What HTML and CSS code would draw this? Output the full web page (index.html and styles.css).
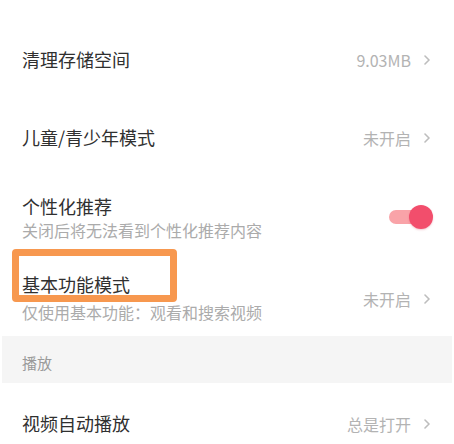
FILE: index.html
```html
<!DOCTYPE html>
<html lang="zh">
<head>
<meta charset="utf-8">
<link rel="stylesheet" href="styles.css">
</head>
<body>
<div class="page">
  <div class="row row-std first">
    <div class="title">清理存储空间</div>
    <div class="value">9.03MB<svg class="chev" width="6" height="10" viewBox="0 0 6 10"><path d="M1 1 L5 5 L1 9" fill="none" stroke="#bdbdbd" stroke-width="1.6" stroke-linecap="round" stroke-linejoin="round"/></svg></div>
  </div>
  <div class="row row-std">
    <div class="title">儿童/青少年模式</div>
    <div class="value">未开启<svg class="chev" width="6" height="10" viewBox="0 0 6 10"><path d="M1 1 L5 5 L1 9" fill="none" stroke="#bdbdbd" stroke-width="1.6" stroke-linecap="round" stroke-linejoin="round"/></svg></div>
  </div>
  <div class="row row-two">
    <div class="block">
      <div class="title">个性化推荐</div>
      <div class="sub">关闭后将无法看到个性化推荐内容</div>
    </div>
    <div class="toggle"><span class="track"></span><span class="thumb"></span></div>
  </div>
  <div class="row row-basic">
    <div class="block">
      <div class="title">基本功能模式</div>
      <div class="sub gap">仅使用基本功能：观看和搜索视频</div>
    </div>
    <div class="value">未开启<svg class="chev" width="6" height="10" viewBox="0 0 6 10"><path d="M1 1 L5 5 L1 9" fill="none" stroke="#bdbdbd" stroke-width="1.6" stroke-linecap="round" stroke-linejoin="round"/></svg></div>
  </div>
  <div class="section">播放</div>
  <div class="row row-last">
    <div class="title">视频自动播放</div>
    <div class="value">总是打开<svg class="chev" width="6" height="10" viewBox="0 0 6 10"><path d="M1 1 L5 5 L1 9" fill="none" stroke="#bdbdbd" stroke-width="1.6" stroke-linecap="round" stroke-linejoin="round"/></svg></div>
  </div>
  <div class="highlight"></div>
</div>
</body>
</html>
```

FILE: styles.css
```css
html, body {
  margin: 0;
  padding: 0;
  background: #ffffff;
}
body {
  width: 454px;
  height: 444px;
  overflow: hidden;
  font-family: "Noto Sans CJK SC", "Noto Sans", sans-serif;
}
.page {
  position: relative;
  display: flex;
  flex-direction: column;
}
.row {
  display: flex;
  align-items: center;
  justify-content: space-between;
  padding: 0 24px 0 22px;
}
.row-std { height: 78px; }
.first { margin-top: 20px; }
.row-two { height: 84px; padding-right: 20px; }
.row-basic { height: 76px; }
.row-last { height: 80px; }
.title {
  font-size: 18px;
  line-height: 24px;
  color: #303030;
}
.sub {
  font-size: 16px;
  line-height: 24px;
  color: #ababab;
}
.sub.gap { margin-top: 4px; }
.block {
  display: flex;
  flex-direction: column;
}
.value {
  display: flex;
  align-items: center;
  font-size: 16px;
  line-height: 22px;
  color: #b3b3b3;
  margin-top: 2px;
}
.chev {
  margin-left: 13px;
  display: block;
}
.toggle {
  position: relative;
  width: 45px;
  height: 24px;
  margin-top: -2px;
}
.track {
  position: absolute;
  left: 0;
  top: 5px;
  width: 34px;
  height: 14px;
  border-radius: 7px;
  background: #f9a3a8;
}
.thumb {
  position: absolute;
  left: 20px;
  top: 0;
  width: 24px;
  height: 24px;
  border-radius: 50%;
  background: #f24e6c;
  box-shadow: 0 1px 2px rgba(200, 40, 70, 0.25);
}
.section {
  height: 47px;
  box-sizing: border-box;
  margin: 0 2px;
  padding: 17px 0 0 20px;
  background: #f5f5f5;
  font-size: 15px;
  line-height: 20px;
  color: #9a9a9a;
}
.highlight {
  position: absolute;
  left: 12px;
  top: 249px;
  width: 165px;
  height: 53px;
  box-sizing: border-box;
  border: 7px solid #f7984f;
  border-radius: 4px;
}
```
